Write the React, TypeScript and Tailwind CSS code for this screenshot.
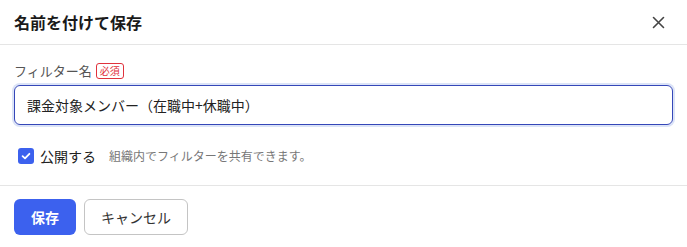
import React from "react";

export default function App() {
  return (
    <div
      className="w-[687px] h-[247px] bg-white text-[#1f1f1f]"
      style={{ fontFamily: '"Noto Sans CJK JP", "Noto Sans", sans-serif' }}
    >
      <div className="h-[45px] px-[14px] flex items-center justify-between border-b border-[#e5e5e5]">
        <div className="text-[16px] font-bold leading-none text-[#1a1a1a]">名前を付けて保存</div>
        <button className="w-[24px] h-[24px] mr-[3px] flex items-center justify-center text-[#444]">
          <svg width="13" height="13" viewBox="0 0 13 13" fill="none" stroke="currentColor" strokeWidth="1.6" strokeLinecap="round">
            <path d="M1.5 1.5 L11.5 11.5 M11.5 1.5 L1.5 11.5" />
          </svg>
        </button>
      </div>
      <div className="px-[14px] pt-[17px] pb-[19px] border-b border-[#e5e5e5]">
        <div className="flex items-center gap-[4px] h-[18px]">
          <span className="text-[13px] text-[#555]">フィルター名</span>
          <span className="h-[16px] px-[3px] flex items-center text-[10px] leading-none text-[#e0323c] border border-[#e0323c] rounded-[3px]">必須</span>
        </div>
        <div className="mt-[5px] h-[40px] rounded-[6px] border border-[#3547b8] ring-[2px] ring-[#dbe3f7] flex items-center px-[12px]">
          <span className="text-[14px] text-[#222]">課金対象メンバー（在職中+休職中）</span>
        </div>
        <div className="mt-[21px] flex items-center h-[20px]">
          <div className="ml-[4px] w-[16px] h-[16px] rounded-[3px] bg-[#3c61ee] flex items-center justify-center">
            <svg width="10" height="10" viewBox="0 0 10 10" fill="none" stroke="white" strokeWidth="1.8" strokeLinecap="round" strokeLinejoin="round">
              <path d="M1.6 5.2 L4 7.4 L8.4 2.8" />
            </svg>
          </div>
          <span className="ml-[6px] text-[14px] text-[#222]">公開する</span>
          <span className="ml-[13px] text-[12px] text-[#777]">組織内でフィルターを共有できます。</span>
        </div>
      </div>
      <div className="px-[14px] pt-[13px] flex gap-[8px]">
        <button className="w-[62px] h-[36px] rounded-[6px] bg-[#3c61ee] text-white text-[14px] font-bold">保存</button>
        <button className="w-[104px] h-[36px] rounded-[6px] border border-[#c4c4c4] bg-white text-[14px] text-[#333]">キャンセル</button>
      </div>
    </div>
  );
}
